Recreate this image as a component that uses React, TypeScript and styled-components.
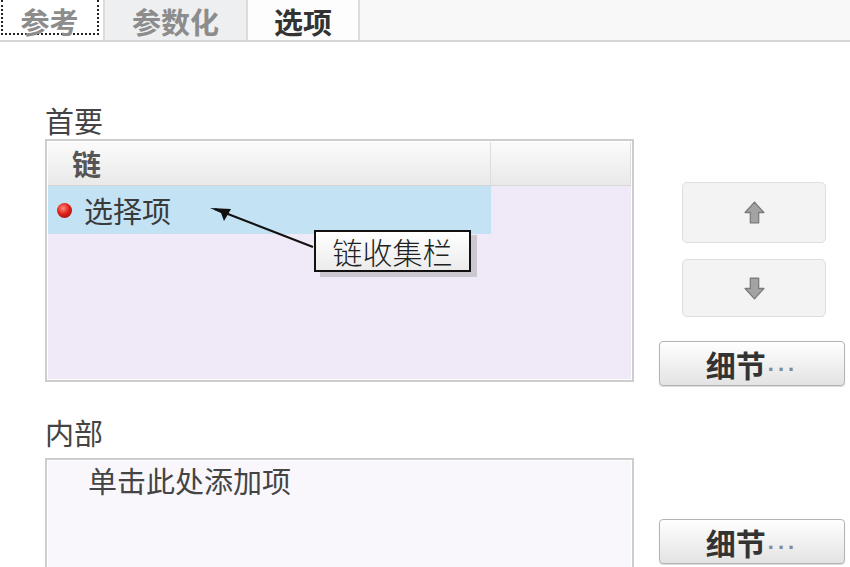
import React from 'react'
import styled, { createGlobalStyle } from 'styled-components'

const GlobalStyle = createGlobalStyle`
  html, body {
    margin: 0;
    padding: 0;
    background: #ffffff;
    font-family: "Noto Sans CJK SC", "Noto Sans", sans-serif;
    overflow: hidden;
  }
`

const Page = styled.div`
  width: 850px;
  height: 567px;
  overflow: hidden;
  background: #ffffff;
`

const TabBar = styled.div`
  display: flex;
  height: 40px;
  border-bottom: 2px solid #d6d6d6;
  background: #f8f8f8;
`

const Tab = styled.div<{ $width: number; $active?: boolean; $bg: string }>`
  width: ${({ $width }) => $width}px;
  display: flex;
  align-items: flex-start;
  justify-content: center;
  border-right: 2px solid #dcdcdc;
  background: ${({ $bg }) => $bg};
  font-size: 29px;
  font-weight: 700;
  line-height: 36px;
  padding-top: 3px;
  box-sizing: border-box;
  color: ${({ $active }) => ($active ? '#333333' : '#8c8c8c')};
`

const FocusRing = styled.span`
  display: inline-block;
  width: 94px;
  height: 30px;
  margin: -3px 0 0 -4px;
  padding-top: 3px;
  border: 2px dotted #222;
  border-top: none;
  text-align: center;
  line-height: 36px;
  overflow: visible;
`

const Content = styled.div`
  padding: 62px 0 0 45px;
  display: flex;
  flex-direction: column;
`

const Section = styled.div<{ $gap: number }>`
  display: flex;
  align-items: flex-start;
  margin-bottom: ${({ $gap }) => $gap}px;
`

const LeftCol = styled.div`
  width: 589px;
  display: flex;
  flex-direction: column;
`

const Label = styled.div<{ $space: number }>`
  font-size: 29px;
  line-height: 32px;
  color: #444;
  margin-bottom: ${({ $space }) => $space}px;
`

const ListBox = styled.div<{ $height: number; $bg: string }>`
  position: relative;
  height: ${({ $height }) => $height}px;
  border: 2px solid #cdcdcd;
  box-shadow: inset 0 0 0 1px #ffffff;
  background: ${({ $bg }) => $bg};
  box-sizing: border-box;
`

const HeaderRow = styled.div`
  display: flex;
  height: 43px;
  margin: 1px 1px 0 1px;
  background: linear-gradient(#fbfbfb, #e9e9e9);
  border-bottom: 1px solid #d6d6d6;
`

const HeaderCell = styled.div<{ $width?: number }>`
  width: ${({ $width }) => ($width ? `${$width}px` : 'auto')};
  flex: ${({ $width }) => ($width ? 'none' : '1')};
  border-right: 1px solid #dddddd;
  padding-left: 24px;
  box-sizing: border-box;
  font-size: 29px;
  font-weight: 700;
  line-height: 42px;
  color: #555;
`

const ItemRow = styled.div`
  width: 443px;
  height: 48px;
  margin-left: 1px;
  display: flex;
  align-items: center;
  background: #c3e2f3;
  font-size: 29px;
  color: #3a3a3a;
`

const RedDot = styled.span`
  width: 15px;
  height: 15px;
  border-radius: 50%;
  margin: 0 12px 0 9px;
  background: radial-gradient(circle at 40% 35%, #ff8a7a 0%, #e0201a 45%, #8c0c08 100%);
`

const Placeholder = styled.div`
  padding: 3px 0 0 41px;
  font-size: 29px;
  line-height: 34px;
  color: #444;
`

const Callout = styled.div`
  position: absolute;
  left: 267px;
  top: 89px;
  width: 157px;
  height: 42px;
  box-sizing: border-box;
  border: 2px solid #111;
  background: linear-gradient(#ffffff, #ececec);
  box-shadow: 6px 5px 0 rgba(160, 160, 160, 0.45);
  font-size: 30px;
  font-weight: 300;
  line-height: 38px;
  text-align: center;
  color: #222;
`

const Pointer = styled.svg`
  position: absolute;
  left: 116px;
  top: 59px;
  overflow: visible;
`

const RightCol = styled.div<{ $top: number }>`
  margin-left: 25px;
  padding-top: ${({ $top }) => $top}px;
  display: flex;
  flex-direction: column;
  align-items: flex-start;
`

const MoveButton = styled.div<{ $height: number; $space: number }>`
  width: 144px;
  height: ${({ $height }) => $height}px;
  margin: 0 0 ${({ $space }) => $space}px 23px;
  box-sizing: border-box;
  border: 1px solid #dedede;
  border-radius: 5px;
  background: #f3f3f3;
  display: flex;
  align-items: center;
  justify-content: center;
`

const DetailButton = styled.div`
  width: 186px;
  height: 45px;
  box-sizing: border-box;
  border: 1px solid #b3b3b3;
  border-radius: 4px;
  background: linear-gradient(#ffffff, #e3e3e3);
  display: flex;
  align-items: center;
  justify-content: center;
  font-size: 30px;
  font-weight: 700;
  color: #333;
  box-shadow: 0 1px 1px rgba(0, 0, 0, 0.15);
`

const Dots = styled.span`
  font-family: "Liberation Sans", sans-serif;
  font-size: 22px;
  letter-spacing: 4px;
  color: #7f8a99;
  margin-left: 2px;
`

const ArrowIcon = ({ down }: { down?: boolean }) => (
  <svg width="21" height="23" viewBox="0 0 20 22">
    <polygon
      points="10,1 19,11 14,11 14,21 6,21 6,11 1,11"
      fill="#a3a3a3"
      stroke="#7a7a7a"
      strokeWidth="1.2"
      strokeLinejoin="round"
      transform={down ? 'rotate(180 10 11)' : undefined}
    />
  </svg>
)

const Details = () => (
  <DetailButton>
    细节<Dots>...</Dots>
  </DetailButton>
)

export default function App() {
  return (
    <Page>
      <GlobalStyle />
      <TabBar>
        <Tab $width={105} $bg="#ffffff">
          <FocusRing>参考</FocusRing>
        </Tab>
        <Tab $width={143} $bg="#eeeff0">参数化</Tab>
        <Tab $width={112} $bg="#fdfdfd" $active>选项</Tab>
      </TabBar>
      <Content>
        <Section $gap={30}>
          <LeftCol>
            <Label $space={3}>首要</Label>
            <ListBox $height={243} $bg="#f0e9f8">
              <HeaderRow>
                <HeaderCell $width={443}>链</HeaderCell>
                <HeaderCell />
              </HeaderRow>
              <ItemRow>
                <RedDot />
                选择项
              </ItemRow>
              <Pointer width="160" height="50">
                <line x1="52" y1="9" x2="150" y2="47" stroke="#111" strokeWidth="2" />
                <polygon points="47,8 68,9 61,21 58,13" fill="#111" />
              </Pointer>
              <Callout>链收集栏</Callout>
            </ListBox>
          </LeftCol>
          <RightCol $top={78}>
            <MoveButton $height={61} $space={16}>
              <ArrowIcon />
            </MoveButton>
            <MoveButton $height={58} $space={24}>
              <ArrowIcon down />
            </MoveButton>
            <Details />
          </RightCol>
        </Section>
        <Section $gap={0}>
          <LeftCol>
            <Label $space={10}>内部</Label>
            <ListBox $height={115} $bg="#f9f7fc">
              <Placeholder>单击此处添加项</Placeholder>
            </ListBox>
          </LeftCol>
          <RightCol $top={103}>
            <Details />
          </RightCol>
        </Section>
      </Content>
    </Page>
  )
}
